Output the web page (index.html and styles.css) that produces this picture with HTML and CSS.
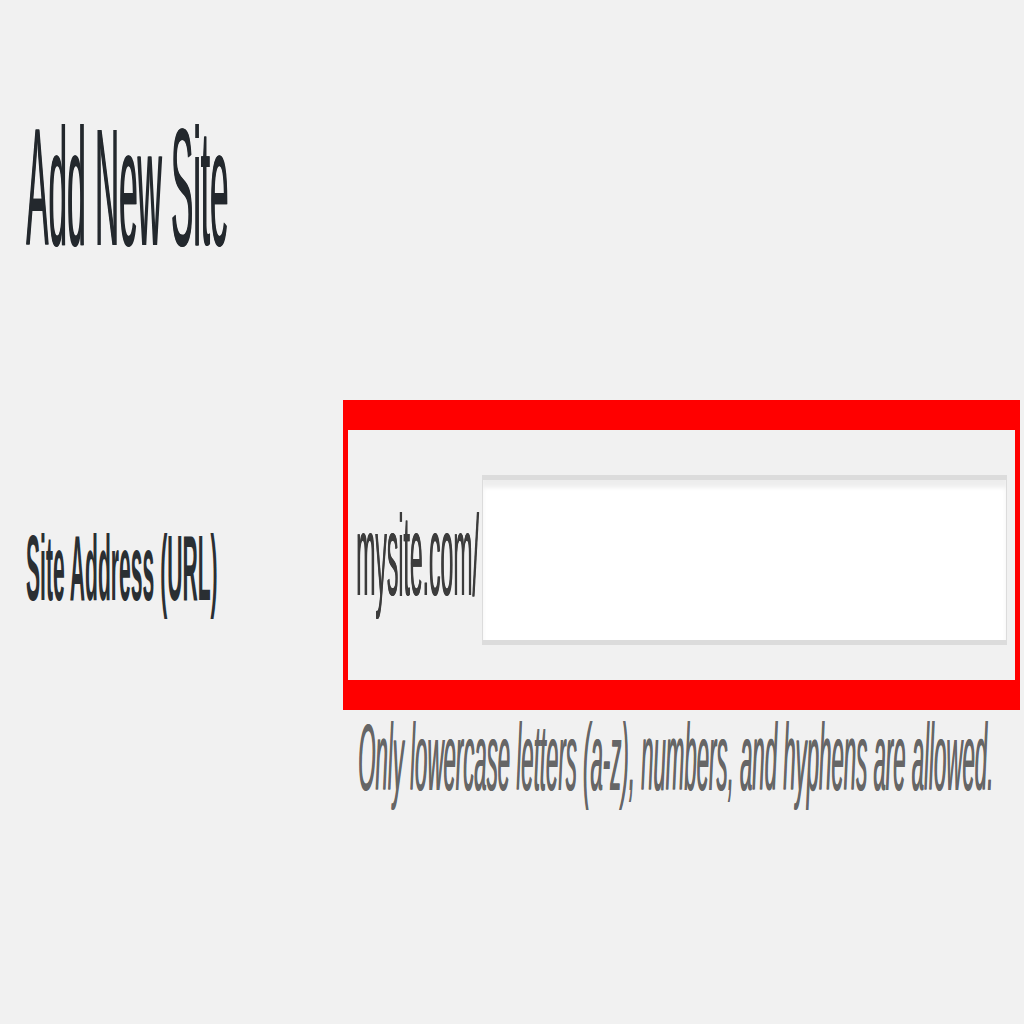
FILE: index.html
```html
<!DOCTYPE html>
<html>
<head>
<meta charset="utf-8">
<link rel="stylesheet" href="styles.css">
</head>
<body>
<div class="page">
  <h1 class="title">Add New Site</h1>
  <div class="form-row">
    <div class="label-cell"><label class="label" for="site">Site Address (URL)</label></div>
    <div class="field-cell">
      <div class="highlight">
        <span class="prefix">mysite.com/</span>
        <input class="url-input" id="site" type="text">
      </div>
      <p class="description"><span class="desc-text">Only lowercase letters (a-z), numbers, and hyphens are allowed.</span></p>
    </div>
  </div>
</div>
</body>
</html>
```
FILE: styles.css
```css
html, body {
  margin: 0;
  padding: 0;
  background: #f1f1f1;
}
body {
  width: 1024px;
  height: 1024px;
  overflow: hidden;
  font-family: "Liberation Sans", Arial, sans-serif;
}
.page {
  width: 1024px;
  height: 204.8px;
  box-sizing: border-box;
  padding-left: 26px;
  transform: scale(1, 5);
  transform-origin: 0 0;
}
.title {
  margin: 0;
  padding-top: 21.4px;
  font-size: 33.4px;
  line-height: 33px;
  font-weight: 400;
  color: #23282d;
  text-shadow: 0.6px 0 0 #23282d;
}
.form-row {
  display: grid;
  grid-template-columns: 317px 677px;
  margin-top: 26px;
}
.label-cell {
  padding-top: 23.8px;
}
.label {
  display: inline-block;
  font-size: 18.7px;
  line-height: 19px;
  font-weight: 700;
  color: #2a2f33;
  transform: scaleX(1.13);
  transform-origin: 0 0;
}
.highlight {
  display: flex;
  align-items: center;
  border-style: solid;
  border-color: #ff0000;
  border-width: 6.6px 5px 6.4px 5px;
  padding: 8.4px 8px 6.8px 8px;
}
.prefix {
  font-size: 23px;
  line-height: 23px;
  color: #3c3c3c;
  white-space: nowrap;
  text-shadow: 0.4px 0 0 #3c3c3c;
}
.url-input {
  flex: 1;
  height: 34px;
  margin: 0 0 0 3px;
  padding: 0;
  box-sizing: border-box;
  border: 1px solid #dcdcdc;
  background: #fff;
  box-shadow: inset 0 1.5px 2px rgba(0, 0, 0, 0.07);
  outline: none;
}
.description {
  margin: 0;
  padding-left: 15px;
  line-height: 19px;
}
.desc-text {
  display: inline-block;
  font-size: 19px;
  font-style: italic;
  color: #666;
  white-space: nowrap;
  text-shadow: 0.4px 0 0 #666;
  transform: scaleX(1.17);
  transform-origin: 0 0;
}
```
